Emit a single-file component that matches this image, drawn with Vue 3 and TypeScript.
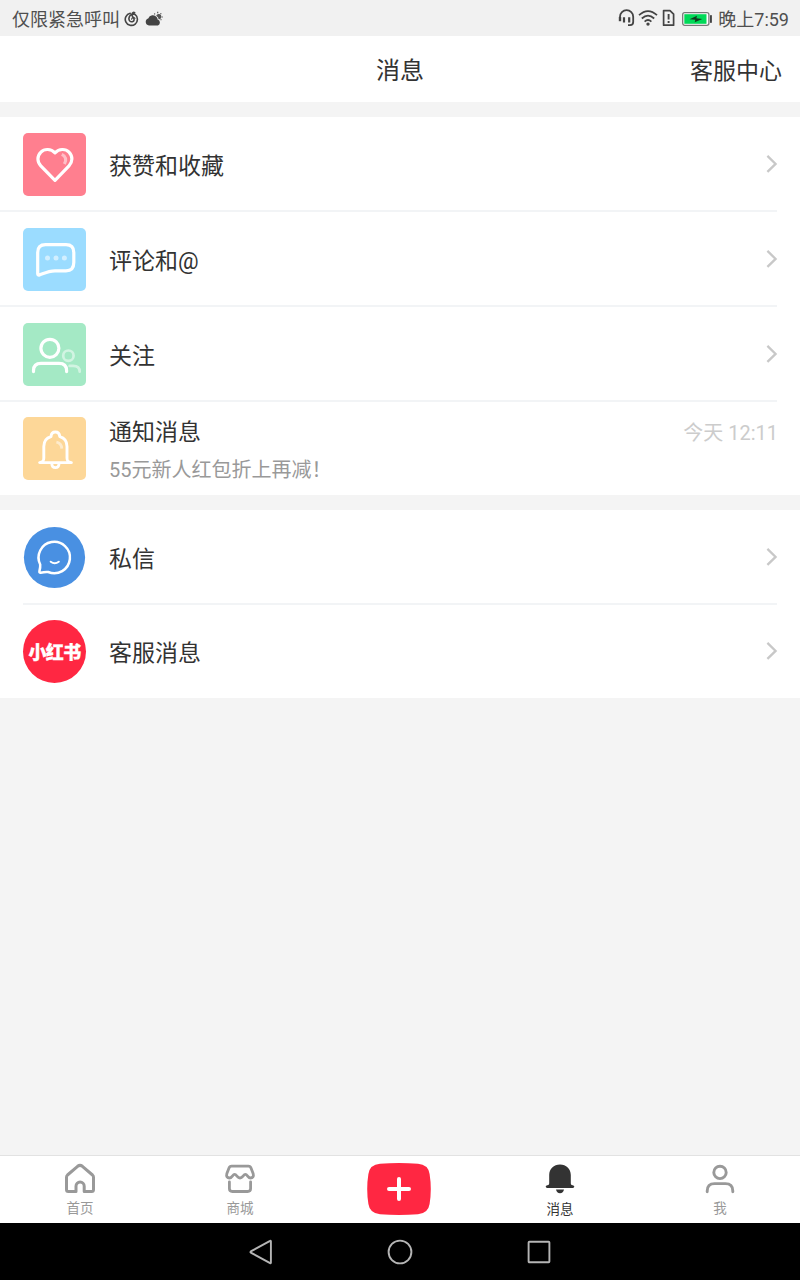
<script setup lang="ts">
interface Entry {
  id: string
  title: string
  subtitle?: string
  time?: string
}

const activity: Entry[] = [
  { id: 'like', title: '获赞和收藏' },
  { id: 'comment', title: '评论和@' },
  { id: 'follow', title: '关注' },
  { id: 'notice', title: '通知消息', subtitle: '55元新人红包折上再减！', time: '今天 12:11' },
]

const chats: Entry[] = [
  { id: 'private', title: '私信' },
  { id: 'service', title: '客服消息' },
]
</script>

<template>
  <div class="screen">
    <div class="status">
      <span class="s-text">仅限紧急呼叫</span>
      <svg class="s-music" width="16" height="16" viewBox="0 0 16 16" fill="none" stroke="#444" stroke-width="1.6" stroke-linecap="round">
        <path d="M6.2 2.3A6.1 6.1 0 1 0 11 3.4C9.4 2.8 7.8 3.2 6.6 4.2C4.7 5.8 4.4 8.5 5.8 10C7.2 11.4 9.8 10.8 10.1 8.8C10.3 6.8 8 6 8 3.4C8 1.6 9.6 .9 10.6 1.7" />
        <path d="M7.6 8.3C7.7 6.5 10 6 11 7.3" stroke-width="1.1" />
      </svg>
      <svg class="s-cloud" width="18" height="16" viewBox="0 0 18 16">
        <path fill="#444" d="M4 14.5A3.6 3.6 0 0 1 3.2 7.5A5 5 0 0 1 11.8 6.2Q12.7 7.6 12.6 8.5A3.2 3.2 0 0 1 13 14.5Z" />
        <path fill="#555" d="M11.2 4.7A2.7 2.7 0 1 1 13.8 8.4A5.2 5.2 0 0 0 11.2 4.7Z" />
        <path stroke="#555" stroke-width="1.2" d="M9.3 2.5L10 3.3M12.7 .8V2.2M16.3 2.3L15.4 3.2M16.6 6H17.8M15.6 8.4L16.4 9.2" />
      </svg>
      <span class="grow"></span>
      <svg class="s-head" width="17" height="18" viewBox="0 0 17 18" fill="none" stroke="#444" stroke-width="1.8">
        <path d="M2 12V7.8A6.2 6.2 0 0 1 15.2 7.8V13Q15.2 16 12 16.2H10" />
        <path d="M6 8.2V13.6M11.2 8.2V13.6" stroke-width="2.2" />
        <path d="M2 8V12.2" stroke-width="2.4" />
      </svg>
      <svg class="s-wifi" width="20" height="18" viewBox="0 0 20 18" fill="none" stroke="#444" stroke-width="1.7">
        <path d="M1 6.2Q10 -2 19 6.2M3.8 9.5Q10 3.8 16.2 9.5M6.6 12.6Q10 9.4 13.4 12.6" />
        <circle cx="10" cy="15.1" r="1.7" fill="#444" stroke="none" />
      </svg>
      <svg class="s-sim" width="13" height="18" viewBox="0 0 13 18" fill="none" stroke="#444" stroke-width="1.7">
        <path d="M1.6 1.6H8L11.6 5.2V16.2H1.6Z" stroke-linejoin="round" />
        <path d="M6.6 5V10.5M6.6 12.1V14" stroke-width="1.9" />
      </svg>
      <svg class="s-bat" width="31" height="16" viewBox="0 0 31 16">
        <rect x=".7" y="1.7" width="26.2" height="12.6" rx="2" fill="#fff" stroke="#777" stroke-width="1.3" />
        <rect x="2.3" y="3.2" width="22.2" height="9.6" fill="#00d958" />
        <path d="M7.5 8.3L15 4.8L14.4 7.3L20.3 7.9L12.7 11.2L13.3 8.8Z" fill="#123b20" />
        <rect x="28" y="4" width="1.9" height="8" rx=".8" fill="#444" />
      </svg>
      <span class="s-text">晚上7:59</span>
    </div>

    <header class="header">
      <h1>消息</h1>
      <a>客服中心</a>
    </header>

    <section class="group activity">
      <div v-for="e in activity" :key="e.id" class="row" :class="e.id">
        <svg class="tile" viewBox="0 0 63 63" fill="none" stroke="#fff" stroke-width="3.2" stroke-linecap="round" stroke-linejoin="round">
          <template v-if="e.id === 'like'">
            <path d="M32 19.8C28 15.7 21.5 15.3 17.9 19.2C13.9 23.3 14 28.8 17.8 32.8L32 47.3L46 32.8C49.8 28.8 49.9 23.3 46 19.2C42.4 15.3 36 15.7 32 19.8Z" />
            <path d="M38.8 21.4Q45 24.4 41.4 31" opacity=".5" stroke-linecap="butt" />
          </template>
          <template v-else-if="e.id === 'comment'">
            <path d="M14.7 24.5Q14.7 16.6 22.5 16.6H43Q50.8 16.6 50.8 24.5V34.5Q50.8 42.8 43 42.8H32C26 42.8 21.5 45 16.5 46.9Q14.7 47.5 14.7 45.8Z" />
            <g fill="#fff" stroke="none" opacity=".55">
              <circle cx="24.5" cy="30" r="2.5" /><circle cx="33" cy="30" r="2.5" /><circle cx="41.4" cy="30" r="2.5" />
            </g>
          </template>
          <template v-else-if="e.id === 'follow'">
            <circle cx="26.9" cy="25.3" r="9" />
            <path d="M10.5 48.6V47.5Q10.5 40.3 18 40.3H36Q43.6 40.3 43.6 47.5V48.6" />
            <g opacity=".5" stroke-width="2.7">
              <circle cx="45.4" cy="32.7" r="5.2" /><path d="M46.6 42.9H50Q56.7 42.9 56.7 48.7" />
            </g>
          </template>
          <template v-else>
            <path d="M16.6 45.6C20 45.1 20.8 43.8 20.8 41V29.6C20.8 24 24 20.8 28 19.7C28.5 13.5 36.2 13.5 36.8 19.7C41 20.8 44 24 44 29.6V41C44 43.8 44.8 45.1 48.4 45.6Z" stroke-width="2.9" />
            <path d="M28.8 47C29 51.8 35.8 51.8 36 47" stroke-width="2.8" />
            <path d="M33.4 25.2Q38.5 26.2 38.8 31.6" opacity=".5" stroke-width="2.8" stroke-linecap="butt" />
          </template>
        </svg>
        <div class="body">
          <div class="title">{{ e.title }}</div>
          <div v-if="e.subtitle" class="sub">{{ e.subtitle }}</div>
        </div>
        <time v-if="e.time">{{ e.time }}</time>
        <svg v-else class="chev" width="12" height="20" viewBox="0 0 12 20"><path d="M1.4 1.9L9.6 9.9L1.4 17.9" fill="none" stroke="#c8c8c8" stroke-width="2.3" /></svg>
      </div>
    </section>

    <section class="group chats">
      <div v-for="e in chats" :key="e.id" class="row" :class="e.id">
        <svg v-if="e.id === 'private'" class="avatar" viewBox="0 0 63 63" fill="none" stroke="#fff" stroke-linecap="round" stroke-linejoin="round">
          <circle cx="31.5" cy="31.5" r="30.6" fill="#4990e2" stroke="none" />
          <path d="M17.2 38.5A15.7 15.7 0 1 1 25.2 46Q22 45.7 17.6 46.7Q16.2 46.8 16.4 45.4Q17.5 41.5 17.2 38.5Z" stroke-width="2.5" />
          <path d="M27.7 35.7Q31.7 38.6 35.8 35.7" stroke-width="2" />
        </svg>
        <div v-else class="brand"><span>小红书</span></div>
        <div class="body"><div class="title">{{ e.title }}</div></div>
        <svg class="chev" width="12" height="20" viewBox="0 0 12 20"><path d="M1.4 1.9L9.6 9.9L1.4 17.9" fill="none" stroke="#c8c8c8" stroke-width="2.3" /></svg>
      </div>
    </section>

    <nav class="tabs">
      <div class="tab">
        <svg viewBox="0 0 32 32" fill="none" stroke="#999" stroke-width="3" stroke-linejoin="round">
          <path d="M12 28.5H4.3Q2.5 28.5 2.5 26.5V14.2Q2.5 13 3.5 12L13.6 3.3Q16 1.4 18.4 3.3L28.5 12Q29.5 13 29.5 14.2V26.5Q29.5 28.5 27.7 28.5H20.2V23.2A4.1 4.1 0 0 0 12 23.2Z" />
        </svg>
        <span>首页</span>
      </div>
      <div class="tab">
        <svg viewBox="0 0 32 32" fill="none" stroke="#999" stroke-width="2.8" stroke-linejoin="round">
          <path d="M7.6 3.2H24.4Q26.4 3.2 27.1 5.2L29.2 10.8C30 13.5 28.6 15 26.6 15C24 15 23.4 11.4 21.4 11.4C19.2 11.4 18.8 15 16 15C13.2 15 12.8 11.4 10.6 11.4C8.6 11.4 8 15 5.4 15C3.4 15 2 13.5 2.8 10.8L4.9 5.2Q5.6 3.2 7.6 3.2Z" />
          <path d="M5.4 18.8V25.5Q5.4 28.5 8.4 28.5H23.6Q26.6 28.5 26.6 25.5V18.8" stroke-linecap="round" />
        </svg>
        <span>商城</span>
      </div>
      <div class="tab add">
        <svg viewBox="0 0 64 52">
          <path fill="#ff2742" d="M13 .8Q32 -.8 51 .8Q61.2 1.6 62.6 11Q65 26 62.6 41Q61.2 50.4 51 51.2Q32 52.8 13 51.2Q2.8 50.4 1.4 41Q-1 26 1.4 11Q2.8 1.6 13 .8Z" />
          <path d="M22 26H42M32 16V36" stroke="#fff" stroke-width="4" stroke-linecap="round" />
        </svg>
      </div>
      <div class="tab on">
        <svg viewBox="0 0 32 32" fill="#333">
          <path d="M16 1.6C22.2 1.6 26.8 6 26.8 12V20.5Q26.8 22 28.6 22.2Q30.3 22.5 30.3 23.6Q30.3 25 28.8 25H3.2Q1.7 25 1.7 23.6Q1.7 22.5 3.4 22.2Q5.2 22 5.2 20.5V12C5.2 6 9.8 1.6 16 1.6Z" />
          <path d="M12 26.6H20Q19.3 30.2 16 30.2T12 26.6Z" />
        </svg>
        <span>消息</span>
      </div>
      <div class="tab">
        <svg viewBox="0 0 32 32" fill="none" stroke="#999" stroke-width="2.9" stroke-linecap="round">
          <circle cx="16" cy="9.4" r="6.2" />
          <path d="M3.2 28.8V28Q3.2 20.6 10.6 20.6H21.4Q28.8 20.6 28.8 28V28.8" />
        </svg>
        <span>我</span>
      </div>
    </nav>

    <div class="sysbar">
      <svg viewBox="0 0 28 28"><path d="M23.9 3.3V24.7Q23.9 25.6 23.1 25.1L3.8 14.6Q3 14 3.8 13.4L23.1 2.9Q23.9 2.4 23.9 3.3Z" /></svg>
      <svg viewBox="0 0 28 28"><circle cx="14" cy="14" r="11.4" /></svg>
      <svg viewBox="0 0 28 28"><rect x="3.6" y="3.8" width="20.8" height="20.4" rx=".8" /></svg>
    </div>
  </div>
</template>

<style>
body {
  margin: 0;
}
</style>

<style scoped>
.screen {
  width: 800px;
  height: 1280px;
  display: flex;
  flex-direction: column;
  background: #f4f4f4;
  color: #333;
  font-family: Roboto, 'Noto Sans CJK SC', sans-serif;
  overflow: hidden;
}
svg {
  display: block;
  flex: none;
}
.status {
  height: 36px;
  flex: none;
  display: flex;
  align-items: center;
  padding: 0 12px;
  background: #f1f1f1;
  color: #4f4f4f;
  font-size: 18px;
  white-space: nowrap;
}
.s-text {
  height: 36px;
  line-height: 39px;
}
.s-text:last-child {
  margin-right: -1px;
}
.grow {
  flex: 1;
}
.s-music {
  margin: 1px 0 0 4px;
}
.s-cloud {
  margin: 1px 0 0 5px;
}
.s-head {
  margin-right: 3px;
}
.s-wifi {
  margin-right: 4px;
}
.s-sim {
  margin-right: 7px;
}
.s-bat {
  margin: 2px 5px 0 0;
}
.header {
  height: 66px;
  box-sizing: border-box;
  flex: none;
  display: grid;
  grid-template-columns: 1fr auto 1fr;
  align-items: center;
  padding: 0 18px 1px;
  background: #fff;
}
.header h1 {
  grid-column: 2;
  margin: 0;
  font-size: 24px;
  font-weight: 400;
}
.header a {
  justify-self: end;
  font-size: 23px;
}
.group {
  margin-top: 15px;
  flex: none;
  background: #fff;
}
.row {
  height: 95px;
  box-sizing: border-box;
  display: flex;
  align-items: flex-start;
  padding: 16px 23px 0;
  background: linear-gradient(#f2f4f6, #f2f4f6) 0 100% / 777px 2px no-repeat;
}
.row.notice {
  height: 93px;
  padding-top: 15px;
  background: none;
}
.chats .private {
  background: linear-gradient(#f2f4f6, #f2f4f6) 23px 100% / 754px 2px no-repeat;
}
.chats .service {
  height: 93px;
  padding-top: 15px;
  background: none;
}
.tile,
.avatar,
.brand {
  width: 63px;
  height: 63px;
  flex: none;
}
.tile {
  border-radius: 5px;
}
.like .tile {
  background: #ff7f8f;
}
.comment .tile {
  background: #9bdcff;
}
.follow .tile {
  background: #a4e9c5;
}
.notice .tile {
  background: #fdd798;
}
.brand {
  display: flex;
  align-items: center;
  justify-content: center;
  border-radius: 50%;
  background: #ff2742;
  color: #fff;
  font-size: 18px;
  font-weight: 900;
  letter-spacing: -0.6px;
  -webkit-text-stroke: 0.3px #fff;
  white-space: nowrap;
}
.brand span {
  margin-top: -2px;
}
.body {
  flex: 1;
  margin-left: 23px;
}
.title {
  font-size: 23px;
  line-height: 67px;
}
.notice .title {
  line-height: 32px;
}
.sub {
  margin-top: 7px;
  color: #999;
  font-size: 20px;
  line-height: 28px;
}
.row time {
  margin-right: -1px;
  color: #ccc;
  font-size: 20px;
  line-height: 33px;
}
.chev {
  margin: 21px -1px 0 0;
}
.tabs {
  height: 68px;
  box-sizing: border-box;
  margin-top: auto;
  flex: none;
  display: grid;
  grid-template-columns: repeat(5, 160px);
  border-top: 1px solid #e2e2e2;
  background: #fff;
}
.tab {
  display: flex;
  flex-direction: column;
  align-items: center;
  padding-top: 7px;
  color: #999;
  font-size: 13.5px;
  line-height: 18px;
}
.tab svg {
  width: 32px;
  height: 32px;
}
.tab span {
  margin-top: 4px;
}
.tab.add {
  padding-right: 2px;
}
.tab.add svg {
  width: 64px;
  height: 52px;
}
.tab.on {
  color: #333;
}
.tab.on span {
  margin-top: 5px;
}
.sysbar {
  height: 57px;
  flex: none;
  display: flex;
  justify-content: center;
  gap: 111px;
  padding-top: 15px;
  box-sizing: border-box;
  background: #000;
}
.sysbar svg {
  width: 28px;
  height: 28px;
  fill: none;
  stroke: #b5b5b5;
  stroke-width: 1.9;
}
</style>
